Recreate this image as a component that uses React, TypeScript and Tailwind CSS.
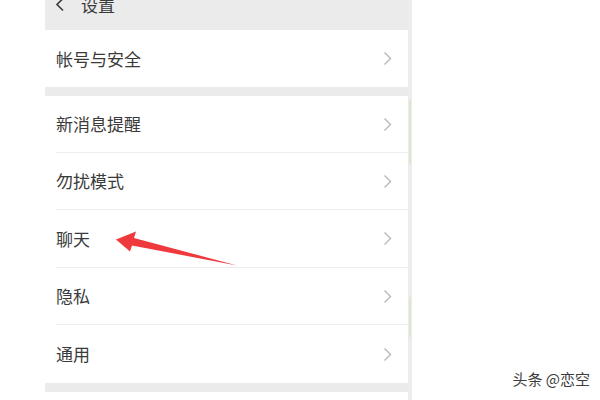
const items = [
  { label: "新消息提醒", h: "h-[57px]" },
  { label: "勿扰模式", h: "h-[57px]" },
  { label: "聊天", h: "h-[58px]" },
  { label: "隐私", h: "h-[57px]" },
  { label: "通用", h: "h-[58px]" },
];

function Chevron() {
  return (
    <svg width="9" height="15" viewBox="0 0 9 15" fill="none">
      <path d="M1.5 1.5 L7.5 7.5 L1.5 13.5" stroke="#b8b8b8" strokeWidth="1.4" />
    </svg>
  );
}

function Row({ label, h, last }: { label: string; h: string; last?: boolean }) {
  return (
    <div className={h + " flex items-center bg-white pl-[11px]"}>
      <div
        className={
          "flex-1 h-full flex items-center justify-between pr-[16px] " +
          (last ? "" : "border-b border-[#ededed]")
        }
      >
        <span className="text-[17px] text-[#3a3a3a]">{label}</span>
        <Chevron />
      </div>
    </div>
  );
}

export default function App() {
  return (
    <div
      className="relative w-[600px] h-[400px] flex bg-white overflow-hidden"
      style={{ fontFamily: '"Noto Sans CJK SC", "Noto Sans", sans-serif' }}
    >
      <div className="w-[45px]" />
      <div className="w-[363px] flex flex-col">
        <div className="h-[30px] bg-[#ebebeb] pl-[10px]">
          <div className="-mt-[8px] flex items-center gap-[16px] text-[17px] text-[#3a3a3a]">
            <svg width="10" height="15" viewBox="0 0 10 15" fill="none">
              <path d="M8 1.5 L2 7.5 L8 13.5" stroke="#3a3a3a" strokeWidth="1.6" />
            </svg>
            <span>设置</span>
          </div>
        </div>
        <Row label="帐号与安全" h="h-[57px]" last />
        <div className="h-[9px] bg-[#ebebeb]" />
        {items.map((it, i) => (
          <Row key={it.label} label={it.label} h={it.h} last={i === items.length - 1} />
        ))}
        <div className="h-[9px] bg-[#ebebeb]" />
        <div className="flex-1 bg-white" />
      </div>
      <div className="w-[4px] flex flex-col bg-[#ececec]">
        <div className="h-[100px]" />
        <div className="h-[64px] ml-[1px] w-[2px] bg-[#dbe9cf]" />
        <div className="h-[133px]" />
        <div className="h-[40px] ml-[1px] w-[2px] bg-[#dbe9cf]" />
      </div>
      <div className="flex-1 flex flex-col justify-end items-end pr-[10px] pb-[10px]">
        <span className="text-[15px] text-[#3d3d3d]">头条 @恋空</span>
      </div>
      <svg className="absolute left-0 top-0" width="600" height="400" viewBox="0 0 600 400">
        <path d="M116 239.5 L136 231.5 L134 238 L237 265.5 L132 245.5 L130 251.5 Z" fill="#f0393c" />
      </svg>
    </div>
  );
}
